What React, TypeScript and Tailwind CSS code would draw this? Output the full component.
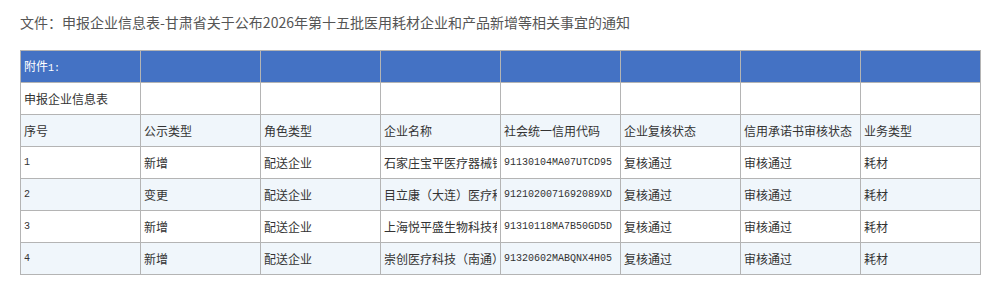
const cjk = '"Noto Sans CJK SC", "Noto Sans", sans-serif';

const rows = [
  ['1', '新增', '配送企业', '石家庄宝平医疗器械销', '91130104MA07UTCD95', '复核通过', '审核通过', '耗材'],
  ['2', '变更', '配送企业', '目立康（大连）医疗科', '9121020071692089XD', '复核通过', '审核通过', '耗材'],
  ['3', '新增', '配送企业', '上海悦平盛生物科技有', '91310118MA7B50GD5D', '复核通过', '审核通过', '耗材'],
  ['4', '新增', '配送企业', '崇创医疗科技（南通）', '91320602MABQNX4H05', '复核通过', '审核通过', '耗材'],
];

const heads = ['序号', '公示类型', '角色类型', '企业名称', '社会统一信用代码', '企业复核状态', '信用承诺书审核状态', '业务类型'];

const cell = 'h-[32px] border border-[#b4b4b4] px-[3px] overflow-hidden whitespace-nowrap align-middle';
const mono = 'font-["Liberation_Mono",monospace] text-[10px]';

export default function App() {
  return (
    <div className="bg-white px-[20px] pt-[12px]" style={{ fontFamily: cjk }}>
      <div className="text-[14px] leading-[20px] text-[#555]">
        文件：申报企业信息表-甘肃省关于公布2026年第十五批医用耗材企业和产品新增等相关事宜的通知
      </div>
      <table className="mt-[18px] w-[961px] table-fixed border-collapse text-[12px] text-[#333]">
        <colgroup>
          {heads.map((h) => (
            <col key={h} className="w-[120px]" />
          ))}
        </colgroup>
        <tbody>
          <tr className="bg-[#4472c4] text-white">
            <td className={cell}>附件<span className={mono}>1:</span></td>
            {heads.slice(1).map((h) => (
              <td key={h} className={cell}></td>
            ))}
          </tr>
          <tr className="bg-white">
            <td className={cell}>申报企业信息表</td>
            {heads.slice(1).map((h) => (
              <td key={h} className={cell}></td>
            ))}
          </tr>
          <tr className="bg-[#f0f6fb]">
            {heads.map((h) => (
              <td key={h} className={cell}>{h}</td>
            ))}
          </tr>
          {rows.map((r, i) => (
            <tr key={r[0]} className={i % 2 === 0 ? 'bg-white' : 'bg-[#f0f6fb]'}>
              {r.map((v, j) => (
                <td key={j} className={cell}>
                  <div className={'overflow-hidden ' + (j === 0 || j === 4 ? mono : '')}>{v}</div>
                </td>
              ))}
            </tr>
          ))}
        </tbody>
      </table>
    </div>
  );
}
